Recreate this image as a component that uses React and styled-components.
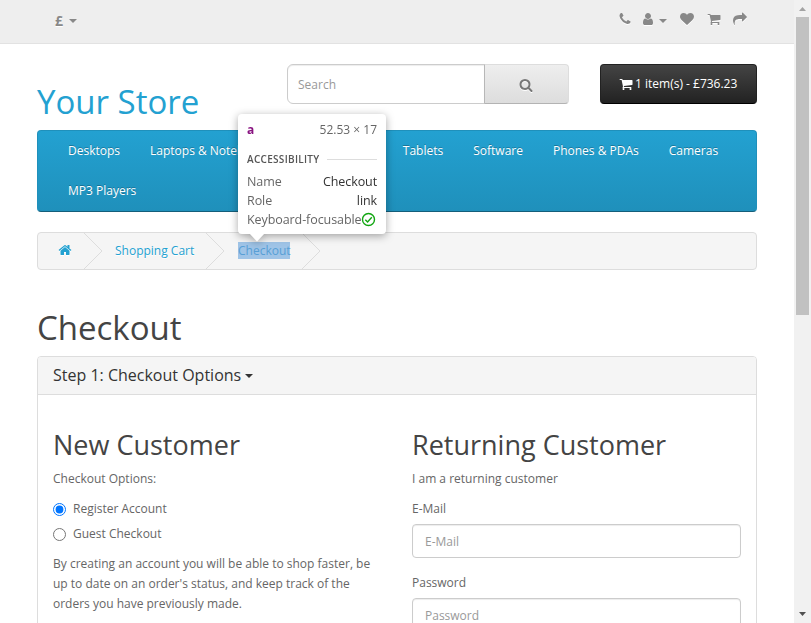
import React from "react";
import styled, { createGlobalStyle } from "styled-components";

const GlobalStyle = createGlobalStyle`
  * { box-sizing: border-box; }
  html, body { margin: 0; padding: 0; height: 623px; overflow: hidden; background: #fff; }
  body { font: 400 12px/20px "Open Sans", "Noto Sans", sans-serif; color: #666; }
  h1, h2, h3, h4, p { margin: 0; font-weight: 400; }
`;

const ICONS = {
  phone:
    "M1600 1240q0 27-10 70.5t-21 68.5q-21 50-122 106-94 51-186 51-27 0-53-3.5t-57.5-12.5-47-14.5-55.5-20.5-49-18q-98-35-175-83-127-79-264-216t-216-264q-48-77-83-175-3-9-18-49t-20.5-55.5-14.5-47-12.5-57.5-3.5-53q0-92 51-186 56-101 106-122 25-11 68.5-21t70.5-10q14 0 21 3 18 6 53 76 11 19 30 54t35 63.5 31 53.5q3 4 17.5 25t21.5 35.5 7 28.5q0 20-28.5 50t-62 55-62 53-28.5 46q0 9 5 22.5t8.5 20.5 14 24 11.5 19q76 137 174 235t235 174q2 1 19 11.5t24 14 20.5 8.5 22.5 5q18 0 46-28.5t53-62 55-62 50-28.5q14 0 28.5 7t35.5 21.5 25 17.5q25 15 53.5 31t63.5 35 54 30q70 35 76 53 3 7 3 21z",
  user:
    "M1536 1399q0 109-62.5 187t-150.5 78h-854q-88 0-150.5-78t-62.5-187q0-85 8.5-160.5t31.5-152 58.5-131 94-89 134.5-34.5q131 128 313 128t313-128q76 0 134.5 34.5t94 89 58.5 131 31.5 152 8.5 160.5zm-256-887q0 159-112.5 271.5t-271.5 112.5-271.5-112.5-112.5-271.5 112.5-271.5 271.5-112.5 271.5 112.5 112.5 271.5z",
  heart:
    "M896 1664q-26 0-44-18l-624-602q-10-8-27.5-26t-55.5-65.5-68-97.5-53.5-121-23.5-138q0-220 127-344t351-124q62 0 126.5 21.5t120 58 95.5 68.5 76 68q36-36 76-68t95.5-68.5 120-58 126.5-21.5q224 0 351 124t127 344q0 221-229 450l-623 600q-18 18-44 18z",
  cart:
    "M704 1536q0 52-38 90t-90 38-90-38-38-90 38-90 90-38 90 38 38 90zm896 0q0 52-38 90t-90 38-90-38-38-90 38-90 90-38 90 38 38 90zm128-1088v512q0 24-16.5 42.5t-40.5 21.5l-1044 122q13 60 13 70 0 16-24 64h920q26 0 45 19t19 45-19 45-45 19h-1024q-26 0-45-19t-19-45q0-11 8-31.5t16-36 21.5-40 15.5-29.5l-177-823h-204q-26 0-45-19t-19-45 19-45 45-19h256q16 0 28.5 6.5t19.5 15.5 13 24.5 8 26 5.5 29.5 4.5 26h1201q26 0 45 19t19 45z",
  share:
    "M1792 640q0 26-19 45l-512 512q-19 19-45 19t-45-19-19-45v-256h-224q-98 0-175.5 6t-154 21.5-133 42.5-105.5 69.5-80 101-48.5 138.5-17.5 181q0 55 5 123 0 6 2.5 23.5t2.5 26.5q0 15-8.5 25t-23.5 10q-16 0-28-17-7-9-13-22t-13.5-30-10.5-24q-127-285-127-451 0-199 53-333 162-403 875-403h224v-256q0-26 19-45t45-19 45 19l512 512q19 19 19 45z",
  search:
    "M1216 832q0-185-131.5-316.5t-316.5-131.5-316.5 131.5-131.5 316.5 131.5 316.5 316.5 131.5 316.5-131.5 131.5-316.5zm512 832q0 52-38 90t-90 38q-54 0-90-38l-343-342q-179 124-399 124-143 0-273.5-55.5t-225-150-150-225-55.5-273.5 55.5-273.5 150-225 225-150 273.5-55.5 273.5 55.5 225 150 150 225 55.5 273.5q0 220-124 399l343 343q37 37 37 90z",
  home:
    "M1472 992v480q0 26-19 45t-45 19h-384v-384h-256v384h-384q-26 0-45-19t-19-45v-480q0-1 .5-3t.5-3l575-474 575 474q1 2 1 6zm223-69l-62 74q-8 9-21 11h-3q-13 0-21-7l-692-577-692 577q-12 8-24 7-13-2-21-11l-62-74q-8-10-7-23.5t11-21.5l719-599q32-26 76-26t76 26l244 204v-195q0-14 9-23t23-9h192q14 0 23 9t9 23v408l219 182q10 8 11 21.5t-7 23.5z",
};

const IconSvg = styled.svg`
  display: block;
  flex: none;
  fill: currentColor;
  overflow: visible;
  filter: ${(p) => (p.$lit ? "drop-shadow(0 1px 0 #fff)" : "none")};
`;
const Icon = ({ name, size = 14, lit }) => (
  <IconSvg $lit={lit} width={size} height={size} viewBox="0 0 1792 1792" aria-hidden="true">
    <path d={ICONS[name]} />
  </IconSvg>
);

const Caret = styled.span`
  width: 0;
  height: 0;
  flex: none;
  border: solid transparent;
  border-width: ${(p) => p.$size || 4}px ${(p) => p.$size || 4}px 0;
  border-top-color: currentColor;
`;

const Viewport = styled.div`
  display: grid;
  grid-template-columns: 1fr 17px;
  width: 811px;
  height: 623px;
  overflow: hidden;
`;
const Page = styled.main`
  height: 623px;
  overflow: hidden;
`;
const Container = styled.div`
  width: 720px;
  margin: 0 auto;
`;

const TopBar = styled.nav`
  height: 44px;
  background: #eee;
  border-bottom: 1px solid #e2e2e2;
  color: #888;
`;
const TopInner = styled(Container)`
  display: flex;
  justify-content: space-between;
  padding: 12px 10px 0 18px;
`;
const Currency = styled.div`
  display: flex;
  align-items: center;
  gap: 6px;
  height: 18px;
  font-weight: 700;
  font-size: 14px;
  text-shadow: 0 1px 0 #fff;
`;
const TopLinks = styled.div`
  display: flex;
  height: 14px;
  align-items: center;
`;
const TopLink = styled.a`
  display: flex;
  align-items: center;
  gap: 4px;
  margin-left: ${(p) => p.$gap || 0}px;
`;
const LowCaret = styled(Caret)`
  margin-top: 4px;
`;

const Header = styled(Container)`
  display: grid;
  grid-template-columns: 250px 282px 157px;
  column-gap: 0;
  justify-content: start;
  height: 86px;
  padding-top: 20px;
`;
const Logo = styled.h1`
  font-size: 33px;
  line-height: 36px;
  padding-top: 20px;
  color: #23a1d1;
  white-space: nowrap;
`;
const SearchBox = styled.form`
  display: flex;
  height: 40px;
`;
const SearchInput = styled.input`
  width: 198px;
  height: 40px;
  padding: 0 10px;
  border: 1px solid #ccc;
  border-radius: 6px 0 0 6px;
  box-shadow: inset 0 1px 1px rgba(0, 0, 0, 0.075);
  font: 12px "Open Sans", sans-serif;
  outline: 0;
  &::placeholder { color: #999; opacity: 1; }
`;
const SearchButton = styled.button`
  display: flex;
  align-items: center;
  justify-content: center;
  width: 85px;
  height: 40px;
  margin-left: -1px;
  padding: 2px 1px 0 0;
  color: #777;
  background: linear-gradient(to bottom, #eee, #ddd);
  border: 1px solid #ccc;
  border-color: #ddd #ddd #b3b3b3 #b7b7b7;
  border-radius: 0 4px 4px 0;
`;
const CartButton = styled.button`
  display: flex;
  align-items: center;
  gap: 2px;
  height: 40px;
  width: 157px;
  margin-left: 31px;
  padding: 0 0 1px 18px;
  color: #fff;
  font: 12px/18px "Open Sans", sans-serif;
  background: linear-gradient(to bottom, #444, #222);
  border: 1px solid;
  border-color: #222 #222 #000;
  border-radius: 4px;
  white-space: nowrap;
`;

const Menu = styled(Container)`
  display: flex;
  flex-wrap: wrap;
  align-content: flex-start;
  height: 82px;
  padding: 0 15px;
  background: linear-gradient(to bottom, #23a1d1, #1f90bb);
  border: 1px solid;
  border-color: #1f90bb #1f90bb #145e7a;
  border-radius: 4px;
`;
const MenuLink = styled.a`
  height: 40px;
  padding: 10px 15px;
  color: #fff;
  text-shadow: 0 -1px 0 rgba(0, 0, 0, 0.25);
  white-space: nowrap;
`;

const Breadcrumb = styled(Container)`
  display: flex;
  align-items: center;
  height: 38px;
  margin-top: 20px;
  background: #f5f5f5;
  border: 1px solid #ddd;
  border-radius: 4px;
`;
const Crumb = styled.a`
  display: flex;
  align-items: center;
  height: 20px;
  width: ${(p) => p.$w}px;
  flex: none;
  padding-left: ${(p) => p.$pad}px;
  padding-bottom: ${(p) => p.$lift || 0}px;
  color: #23a1d1;
  text-shadow: 0 1px 0 #fff;
  white-space: nowrap;
`;
const Highlight = styled.span`
  width: 52px;
  height: 17px;
  line-height: 17px;
  background: #9fc4e7;
  color: #579fd6;
  text-shadow: none;
`;
const ChevronSvg = styled.svg`
  display: block;
  flex: none;
  fill: none;
  stroke: #ddd;
`;
const Chevron = () => (
  <ChevronSvg width="20" height="36" viewBox="0 0 20 36" aria-hidden="true">
    <path d="M0 0L18 18L0 36" />
  </ChevronSvg>
);

const PageTitle = styled.h1`
  height: 88px;
  padding-top: 40px;
  font-size: 33px;
  line-height: 36px;
  color: #444;
`;
const Panel = styled.section`
  margin-top: -2px;
  height: 400px;
  border: 1px solid #ddd;
  border-radius: 4px;
`;
const PanelHeading = styled.header`
  display: flex;
  align-items: center;
  gap: 4px;
  height: 38px;
  padding: 0 15px 2px;
  background: #f5f5f5;
  border-bottom: 1px solid #ddd;
  border-radius: 3px 3px 0 0;
  color: #333;
`;
const PanelTitle = styled.h4`
  font-size: 16px;
  line-height: 18px;
`;
const HeadingCaret = styled(Caret)`
  margin-top: 2px;
`;
const PanelBody = styled.div`
  display: grid;
  grid-template-columns: 329px 329px;
  column-gap: 30px;
  padding: 35px 15px 0;
`;
const Column = styled.div``;
const ColumnTitle = styled.h2`
  height: 30px;
  font-size: 27px;
  line-height: 30px;
  color: #444;
  white-space: nowrap;
`;
const Copy = styled.p`
  margin-top: ${(p) => p.$top || 0}px;
  white-space: nowrap;
`;
const RadioRow = styled.label`
  display: flex;
  align-items: center;
  gap: 7px;
  height: 20px;
  margin-top: ${(p) => p.$top}px;
`;
const Radio = styled.input`
  width: 13px;
  height: 13px;
  margin: 0;
  accent-color: #0075ff;
`;
const Label = styled.label`
  display: block;
  margin-top: ${(p) => p.$top}px;
`;
const TextInput = styled.input`
  display: block;
  width: 329px;
  height: 34px;
  margin-top: 5px;
  padding: 0 12px;
  border: 1px solid #ccc;
  border-radius: 4px;
  box-shadow: inset 0 1px 1px rgba(0, 0, 0, 0.075);
  font: 12px "Open Sans", sans-serif;
  outline: 0;
  &::placeholder { color: #999; opacity: 1; }
`;

const Scrollbar = styled.aside`
  display: flex;
  flex-direction: column;
  align-items: center;
  justify-content: space-between;
  height: 623px;
  background: #f1f1f1;
`;
const Thumb = styled.div`
  width: 13px;
  height: 298px;
  margin-bottom: auto;
  background: #c1c1c1;
`;
const Arrow = styled.svg`
  display: block;
  width: 17px;
  height: 17px;
  flex: none;
  fill: ${(p) => p.$color};
`;

const Tooltip = styled.div`
  position: absolute;
  left: 238px;
  top: 114px;
  width: 148px;
  height: 120px;
  padding: 6px 9px 0;
  background: #fff;
  border-radius: 4px;
  filter: drop-shadow(0 2px 4px rgba(0, 0, 0, 0.35));
  font-size: 12.5px;
  line-height: 19px;
  color: #666;
`;
const TipRow = styled.div`
  display: flex;
  align-items: center;
  justify-content: space-between;
  height: 19px;
  white-space: nowrap;
`;
const TagName = styled.b`
  color: #881280;
  font-size: 12px;
`;
const Dimensions = styled.span`
  font-size: 12px;
`;
const TipSection = styled.div`
  display: flex;
  align-items: center;
  gap: 7px;
  height: 19px;
  margin-top: 11px;
  margin-bottom: 3px;
  font-size: 10px;
  font-weight: 600;
  color: #555;
  letter-spacing: 0.3px;
  &::after { content: ""; flex: 1; height: 1px; background: #ddd; }
`;
const TipValue = styled.span`
  color: #333;
  letter-spacing: -0.1px;
`;
const TipName = styled.span`
  letter-spacing: -0.08px;
`;
const TipArrow = styled.svg`
  position: absolute;
  left: 11px;
  top: 119px;
  fill: #fff;
`;
const CheckSvg = styled.svg`
  display: block;
  flex: none;
  margin: 0 1px 0 -1px;
  fill: none;
  stroke: #11a611;
  stroke-width: 1.4;
`;

const categories = [
  "Desktops", "Laptops & Notebooks", "Components", "Tablets",
  "Software", "Phones & PDAs", "Cameras", "MP3 Players",
];

export default function App() {
  return (
    <>
      <GlobalStyle />
      <Viewport>
        <Page>
          <TopBar>
            <TopInner>
              <Currency>£ <Caret $size={4.5} /></Currency>
              <TopLinks>
                <TopLink><Icon name="phone" lit /></TopLink>
                <TopLink $gap={9}><Icon name="user" lit /><LowCaret /></TopLink>
                <TopLink $gap={13}><Icon name="heart" lit /></TopLink>
                <TopLink $gap={13}><Icon name="cart" lit /></TopLink>
                <TopLink $gap={12}><Icon name="share" lit /></TopLink>
              </TopLinks>
            </TopInner>
          </TopBar>
          <Header>
            <Logo>Your Store</Logo>
            <SearchBox>
              <SearchInput placeholder="Search" />
              <SearchButton type="button" aria-label="Search"><Icon name="search" lit /></SearchButton>
            </SearchBox>
            <CartButton><Icon name="cart" />1 item(s) - £736.23</CartButton>
          </Header>
          <Menu as="nav">
            {categories.map((c) => <MenuLink key={c}>{c}</MenuLink>)}
          </Menu>
          <Breadcrumb>
            <Crumb $w={46} $pad={20} $lift={2}><Icon name="home" lit /></Crumb>
            <Chevron />
            <Crumb $w={102} $pad={11}>Shopping Cart</Crumb>
            <Chevron />
            <Crumb $w={76} $pad={12} $lift={1}><Highlight>Checkout</Highlight></Crumb>
            <Chevron />
          </Breadcrumb>
          <Container>
            <PageTitle>Checkout</PageTitle>
            <Panel>
              <PanelHeading>
                <PanelTitle>Step 1: Checkout Options</PanelTitle>
                <HeadingCaret />
              </PanelHeading>
              <PanelBody>
                <Column>
                  <ColumnTitle>New Customer</ColumnTitle>
                  <Copy $top={9}>Checkout Options:</Copy>
                  <RadioRow $top={10}><Radio type="radio" name="account" defaultChecked />Register Account</RadioRow>
                  <RadioRow $top={5}><Radio type="radio" name="account" />Guest Checkout</RadioRow>
                  <Copy $top={10}>
                    By creating an account you will be able to shop faster, be<br />
                    up to date on an order's status, and keep track of the<br />
                    orders you have previously made.
                  </Copy>
                </Column>
                <Column>
                  <ColumnTitle>Returning Customer</ColumnTitle>
                  <Copy $top={9}>I am a returning customer</Copy>
                  <Label $top={10}>E-Mail</Label>
                  <TextInput placeholder="E-Mail" />
                  <Label $top={15}>Password</Label>
                  <TextInput placeholder="Password" />
                </Column>
              </PanelBody>
            </Panel>
          </Container>
        </Page>
        <Scrollbar>
          <Arrow $color="#a3a3a3" viewBox="0 0 17 17"><path d="M5 11L8.5 7L12 11z" /></Arrow>
          <Thumb />
          <Arrow $color="#505050" viewBox="0 0 17 17"><path d="M5 6L8.5 10L12 6z" /></Arrow>
        </Scrollbar>
      </Viewport>
      <Tooltip>
        <TipRow><TagName>a</TagName><Dimensions>52.53 × 17</Dimensions></TipRow>
        <TipSection>ACCESSIBILITY</TipSection>
        <TipRow><TipName>Name</TipName><TipValue>Checkout</TipValue></TipRow>
        <TipRow><TipName>Role</TipName><TipValue>link</TipValue></TipRow>
        <TipRow>
          <TipName>Keyboard-focusable</TipName>
          <CheckSvg width="15" height="15" viewBox="0 0 15 15">
            <circle cx="7.5" cy="7.5" r="6" /><path d="M4.3 7.7L6.6 10L10.8 5.2" />
          </CheckSvg>
        </TipRow>
        <TipArrow width="16" height="9" viewBox="0 0 16 9"><path d="M0 0H16L8 8.5z" /></TipArrow>
      </Tooltip>
    </>
  );
}
